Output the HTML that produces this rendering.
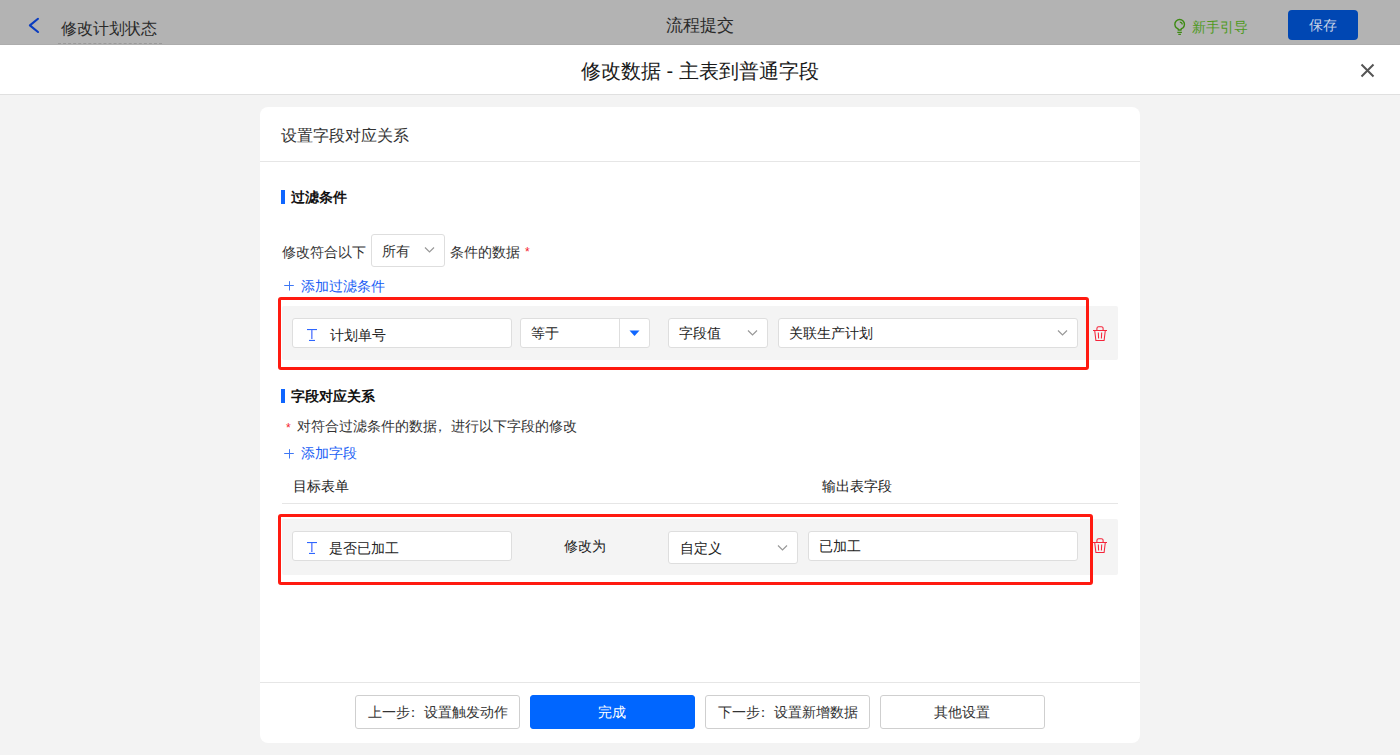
<!DOCTYPE html>
<html><head><meta charset="utf-8">
<style>
*{margin:0;padding:0;box-sizing:border-box;}
html,body{width:1400px;height:755px;overflow:hidden;}
body{position:relative;background:#f3f3f3;font-family:"Liberation Sans",sans-serif;color:#333;font-size:14px;}
.abs{position:absolute;}
.t{position:absolute;white-space:nowrap;line-height:1;}
#topbar{left:0;top:0;width:1400px;height:45px;background:#b3b3b3;border-bottom:1px solid #adadad;}
#mhead{left:0;top:45px;width:1400px;height:50px;background:#fff;border-bottom:1px solid #e0e0e0;}
#card{left:260px;top:107px;width:880px;height:636px;background:#fff;border-radius:8px;}
.bar{position:absolute;width:4px;height:14px;background:#0f66ff;}
.bold{font-weight:bold;color:#111;}
.inp{position:absolute;background:#fff;border:1px solid #dedede;border-radius:3px;}
.row{position:absolute;background:#f4f4f4;border-radius:2px;}
.redbox{position:absolute;border:3px solid #ff1a10;border-radius:3px;}
.btn{position:absolute;top:695px;width:165px;height:34px;border:1px solid #cfcfcf;border-radius:3px;background:#fff;}
.link{color:#1a5ef5;}
</style></head>
<body>
<!-- top bar -->
<div id="topbar" class="abs"></div>
<svg class="abs" style="left:27px;top:15px" width="16" height="20" viewBox="0 0 16 20"><path d="M11 3.8 L2.9 10.4 L11 17" fill="none" stroke="#0a3cc0" stroke-width="2.1" stroke-linecap="round" stroke-linejoin="round"/></svg>
<div class="t" style="left:61px;top:21px;font-size:16px;color:#2a2a2a;">修改计划状态</div>
<div class="abs" style="left:58px;top:43px;width:104px;border-top:1px dashed #9a9a9a;"></div>
<div class="t" style="left:666px;top:17px;font-size:17px;color:#2a2a2a;">流程提交</div>
<svg class="abs" style="left:1172px;top:17px" width="16" height="19" viewBox="0 0 16 19"><path d="M6.2 13V12.1C6.2 11.6 5.3 11.3 4.45 10.9A4.8 4.8 0 1 1 10.85 10.9C10 11.3 9.1 11.6 9.1 12.1V13Z" fill="none" stroke="#3d8a12" stroke-width="1.4" stroke-linejoin="round"/><path d="M5.3 15.4H9.9M6.3 17.3H8.9" stroke="#3d8a12" stroke-width="1.3"/><path d="M7.8 5.1A2.4 2.4 0 0 1 10.2 7.5" fill="none" stroke="#3d8a12" stroke-width="1.3"/></svg>
<div class="t" style="left:1192px;top:20px;font-size:14px;color:#4f9a1c;">新手引导</div>
<div class="abs" style="left:1288px;top:10px;width:70px;height:30px;background:#0047b3;border-radius:4px;"></div>
<div class="t" style="left:1309px;top:18px;font-size:14px;color:#c8d3e6;">保存</div>

<!-- modal header -->
<div id="mhead" class="abs"></div>
<div class="t" style="left:581px;top:61px;font-size:20px;color:#1a1a1a;">修改数据 - 主表到普通字段</div>
<svg class="abs" style="left:1360px;top:63px" width="15" height="15" viewBox="0 0 15 15"><path d="M1.5 1.5L13.5 13.5M13.5 1.5L1.5 13.5" stroke="#555" stroke-width="2"/></svg>

<!-- card -->
<div id="card" class="abs"></div>
<div class="t" style="left:281px;top:128px;font-size:16px;color:#333;">设置字段对应关系</div>
<div class="abs" style="left:260px;top:161px;width:880px;height:1px;background:#e6e6e6;"></div>

<div class="bar" style="left:281px;top:190px;"></div>
<div class="t bold" style="left:291px;top:190px;font-size:14px;">过滤条件</div>

<div class="t" style="left:282px;top:245px;font-size:14px;">修改符合以下</div>
<div class="inp" style="left:371px;top:234px;width:74px;height:33px;"></div>
<div class="t" style="left:382px;top:244px;font-size:14px;">所有</div>
<svg class="abs" style="left:424px;top:246px" width="11" height="8" viewBox="0 0 11 8"><path d="M1 1.5L5.5 6L10 1.5" fill="none" stroke="#999" stroke-width="1.2"/></svg>
<div class="t" style="left:450px;top:245px;font-size:14px;">条件的数据</div>
<div class="t" style="left:525px;top:246px;font-size:12px;color:#f5222d;">*</div>

<svg class="abs" style="left:283px;top:280px" width="12" height="12" viewBox="0 0 12 12"><path d="M1.2 5.5H10.8M6.5 1.2V10.5" stroke="#3f78f5" stroke-width="1"/></svg>
<div class="t link" style="left:301px;top:279px;font-size:14px;">添加过滤条件</div>

<!-- filter row -->
<div class="row" style="left:282px;top:306px;width:836px;height:54px;"></div>
<div class="inp" style="left:292px;top:318px;width:220px;height:30px;"></div>
<svg class="abs" style="left:306px;top:328px" width="12" height="14" viewBox="0 0 12 14"><rect x="1" y="1" width="10" height="1.1" fill="#2e66ff"/><rect x="5" y="2" width="1.6" height="9" fill="#6f8cff"/><rect x="3" y="11.9" width="6" height="1.1" fill="#2e66ff"/></svg>
<div class="t" style="left:330px;top:328px;font-size:14px;color:#222;">计划单号</div>
<div class="inp" style="left:520px;top:318px;width:130px;height:30px;"></div>
<div class="abs" style="left:619px;top:319px;width:1px;height:28px;background:#dedede;"></div>
<svg class="abs" style="left:629px;top:330px" width="11" height="7" viewBox="0 0 11 7"><path d="M0.5 0.5H10.5L5.5 6z" fill="#0f66ff"/></svg>
<div class="t" style="left:531px;top:326px;font-size:14px;color:#222;">等于</div>
<div class="inp" style="left:668px;top:318px;width:100px;height:30px;"></div>
<div class="t" style="left:679px;top:326px;font-size:14px;color:#222;">字段值</div>
<svg class="abs" style="left:747px;top:329px" width="11" height="8" viewBox="0 0 11 8"><path d="M1 1.5L5.5 6L10 1.5" fill="none" stroke="#999" stroke-width="1.2"/></svg>
<div class="inp" style="left:778px;top:318px;width:300px;height:30px;"></div>
<div class="t" style="left:789px;top:326px;font-size:14px;color:#222;">关联生产计划</div>
<svg class="abs" style="left:1057px;top:329px" width="11" height="8" viewBox="0 0 11 8"><path d="M1 1.5L5.5 6L10 1.5" fill="none" stroke="#999" stroke-width="1.2"/></svg>
<svg class="abs" style="left:1092px;top:325px" width="16" height="17" viewBox="0 0 16 17"><path d="M1 5.5H15M4.9 5.5V3.4A1.7 1.7 0 0 1 6.6 1.7H9.4A1.7 1.7 0 0 1 11.1 3.4V5.5M2.7 5.5L3.9 15.5H12.1L13.3 5.5M6.3 7.5L6.6 13.5M9.7 7.5L9.4 13.5" fill="none" stroke="#f5243a" stroke-width="1.05"/></svg>
<div class="redbox" style="left:278px;top:297px;width:811px;height:73px;"></div>

<!-- field section -->
<div class="bar" style="left:281px;top:389px;"></div>
<div class="t bold" style="left:291px;top:389px;font-size:14px;">字段对应关系</div>
<div class="t" style="left:286px;top:422px;font-size:12px;color:#f5222d;">*</div>
<div class="t" style="left:297px;top:419px;font-size:14px;">对符合过滤条件的数据<span style="margin-left:-4px;margin-right:4px">，</span>进行以下字段的修改</div>
<svg class="abs" style="left:283px;top:448px" width="12" height="12" viewBox="0 0 12 12"><path d="M1.2 5.5H10.8M6.5 1.2V10.5" stroke="#3f78f5" stroke-width="1"/></svg>
<div class="t link" style="left:301px;top:446px;font-size:14px;">添加字段</div>
<div class="t" style="left:293px;top:479px;font-size:14px;color:#222;">目标表单</div>
<div class="t" style="left:822px;top:479px;font-size:14px;color:#222;">输出表字段</div>
<div class="abs" style="left:282px;top:503px;width:836px;height:1px;background:#e6e6e6;"></div>

<div class="row" style="left:282px;top:519px;width:836px;height:56px;"></div>
<div class="inp" style="left:292px;top:531px;width:220px;height:30px;"></div>
<svg class="abs" style="left:306px;top:541px" width="12" height="14" viewBox="0 0 12 14"><rect x="1" y="1" width="10" height="1.1" fill="#2e66ff"/><rect x="5" y="2" width="1.6" height="9" fill="#6f8cff"/><rect x="3" y="11.9" width="6" height="1.1" fill="#2e66ff"/></svg>
<div class="t" style="left:329px;top:541px;font-size:14px;color:#222;">是否已加工</div>
<div class="t" style="left:564px;top:539px;font-size:14px;color:#222;">修改为</div>
<div class="inp" style="left:668px;top:531px;width:130px;height:33px;"></div>
<div class="t" style="left:680px;top:541px;font-size:14px;color:#222;">自定义</div>
<svg class="abs" style="left:777px;top:544px" width="11" height="8" viewBox="0 0 11 8"><path d="M1 1.5L5.5 6L10 1.5" fill="none" stroke="#999" stroke-width="1.2"/></svg>
<div class="inp" style="left:808px;top:531px;width:270px;height:30px;"></div>
<div class="t" style="left:819px;top:539px;font-size:14px;color:#222;">已加工</div>
<svg class="abs" style="left:1092px;top:537px" width="16" height="17" viewBox="0 0 16 17"><path d="M1 5.5H15M4.9 5.5V3.4A1.7 1.7 0 0 1 6.6 1.7H9.4A1.7 1.7 0 0 1 11.1 3.4V5.5M2.7 5.5L3.9 15.5H12.1L13.3 5.5M6.3 7.5L6.6 13.5M9.7 7.5L9.4 13.5" fill="none" stroke="#f5243a" stroke-width="1.05"/></svg>
<div class="redbox" style="left:278px;top:514px;width:815px;height:71px;"></div>

<!-- footer -->
<div class="abs" style="left:260px;top:682px;width:880px;height:1px;background:#e6e6e6;"></div>
<div class="btn" style="left:355px;"></div>
<div class="t" style="left:368px;top:705px;font-size:14px;color:#333;">上一步<span style="margin-left:-4px;margin-right:4px">：</span>设置触发动作</div>
<div class="btn" style="left:530px;background:#0066ff;border-color:#0066ff;"></div>
<div class="t" style="left:598px;top:705px;font-size:14px;color:#fff;">完成</div>
<div class="btn" style="left:705px;"></div>
<div class="t" style="left:718px;top:705px;font-size:14px;color:#333;">下一步<span style="margin-left:-4px;margin-right:4px">：</span>设置新增数据</div>
<div class="btn" style="left:880px;"></div>
<div class="t" style="left:934px;top:705px;font-size:14px;color:#333;">其他设置</div>
</body></html>
